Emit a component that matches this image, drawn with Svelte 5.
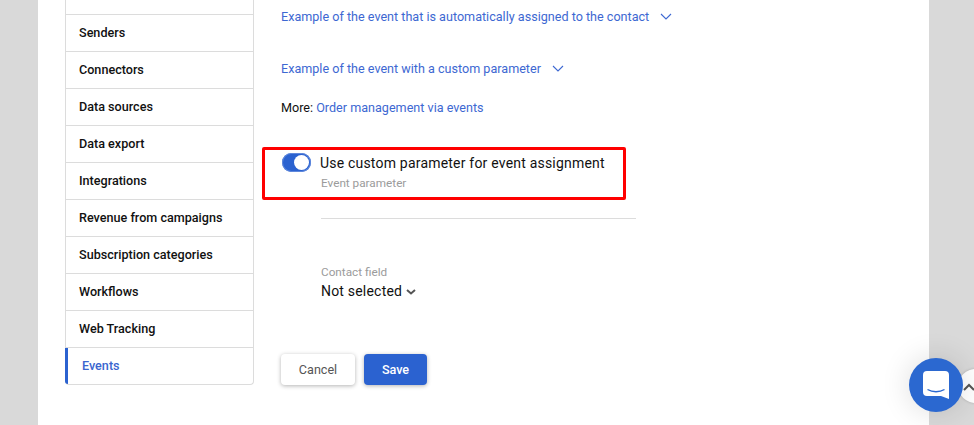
<script>
  const items = [
    'Senders',
    'Connectors',
    'Data sources',
    'Data export',
    'Integrations',
    'Revenue from campaigns',
    'Subscription categories',
    'Workflows',
    'Web Tracking'
  ]
</script>

<div class="page">
  <div class="sheet">
    <nav class="menu">
      <div class="menu__top"></div>
      {#each items as item}
        <a class="menu__item" href="#top">{item}</a>
      {/each}
      <a class="menu__item menu__item--active" href="#top">Events</a>
    </nav>

    <main class="content">
      <a class="example example--first" href="#top">
        Example of the event that is automatically assigned to the contact
        <svg width="12" height="7" viewBox="0 0 12 7"><path d="M1 1l5 5 5-5" /></svg>
      </a>
      <a class="example example--second" href="#top">
        Example of the event with a custom parameter
        <svg width="12" height="7" viewBox="0 0 12 7"><path d="M1 1l5 5 5-5" /></svg>
      </a>
      <p class="more">More: <a href="#top">Order management via events</a></p>

      <div class="param">
        <div class="param__outline"></div>
        <span class="switch"><span class="switch__knob"></span></span>
        <div>
          <div class="param__title">Use custom parameter for event assignment</div>
          <div class="param__hint">Event parameter</div>
        </div>
      </div>

      <hr class="divider" />

      <div class="field">
        <div class="field__label">Contact field</div>
        <div class="field__value">
          Not selected
          <svg width="10" height="6" viewBox="0 0 10 6"><path d="M1 1l4 3.5L9 1" /></svg>
        </div>
      </div>

      <div class="actions">
        <button class="btn btn--cancel" type="button">Cancel</button>
        <button class="btn btn--save" type="button">Save</button>
      </div>
    </main>
  </div>

  <button class="to-top" type="button" aria-label="Scroll to top">
    <svg width="12" height="8" viewBox="0 0 12 8"><path d="M1 7l5-5 5 5" /></svg>
  </button>
  <button class="chat" type="button" aria-label="Chat">
    <svg width="28" height="28" viewBox="0 0 28 28">
      <path class="chat__bubble" d="M4 0h18a4 4 0 0 1 4 4v24l-8-3H4a4 4 0 0 1-4-4V4a4 4 0 0 1 4-4z" />
      <path class="chat__smile" d="M4.5 18.5c5 3 12 3 17 0" />
    </svg>
  </button>
</div>

<style>
  :global(body) {
    margin: 0;
    background: #d9d9d9;
  }

  .page {
    position: relative;
    width: 974px;
    height: 425px;
    overflow: hidden;
    font-family: Roboto, sans-serif;
    font-size: 12.6px;
    color: #111;
  }

  .sheet {
    display: flex;
    align-items: flex-start;
    width: 891px;
    height: 425px;
    margin-left: 38px;
    padding-left: 27px;
    box-sizing: border-box;
    background: #fff;
  }

  /* Sidebar */
  .menu {
    flex: none;
    width: 189px;
    box-sizing: border-box;
    border: 1px solid #dcdcdc;
    border-top: none;
    border-radius: 0 0 4px 4px;
  }

  .menu__top {
    height: 14px;
    border-bottom: 1px solid #dcdcdc;
  }

  .menu__item {
    display: flex;
    align-items: center;
    height: 34px;
    padding: 0 0 2px 13px;
    font-weight: 500;
    color: #111;
    text-decoration: none;
    border-bottom: 1px solid #dcdcdc;
  }

  .menu__item--active {
    padding-left: 14px;
    margin-left: -1px;
    border-left: 3px solid #2b62d0;
    border-bottom: none;
    border-bottom-left-radius: 3px;
    color: #3a66cf;
  }

  /* Main column */
  .content {
    flex: none;
    width: 400px;
    margin-left: 27px;
  }

  a {
    color: #3d68d2;
    text-decoration: none;
  }

  .example {
    display: flex;
    align-items: center;
    gap: 11px;
    height: 16px;
    white-space: nowrap;
  }

  svg path {
    fill: none;
    stroke: currentColor;
  }

  .example svg path {
    stroke-width: 1.1;
  }

  .example--first {
    margin-top: 8px;
  }

  .example--second {
    margin-top: 36px;
  }

  .more {
    margin: 24px 0 0;
    line-height: 16px;
  }

  .param {
    position: relative;
    display: flex;
    gap: 9px;
    margin-top: 40px;
    padding-left: 1px;
    height: 38px;
  }

  .param__outline {
    position: absolute;
    top: -9px;
    left: -19px;
    width: 364px;
    height: 53px;
    box-sizing: border-box;
    border: 3px solid #f00;
    border-radius: 2px;
  }

  .switch {
    flex: none;
    display: block;
    position: relative;
    width: 29px;
    height: 19px;
    margin-top: -3px;
    border-radius: 10px;
    background: #2b62d0;
    box-shadow: inset 0 0 0 1px #5f88dc;
  }

  .switch__knob {
    position: absolute;
    top: 2px;
    right: 2px;
    width: 15px;
    height: 15px;
    border-radius: 50%;
    background: #fff;
  }

  .param__title {
    margin-top: -1px;
    font-size: 14px;
    line-height: 16px;
    letter-spacing: 0.2px;
    white-space: nowrap;
  }

  .param__hint {
    margin: 5px 0 0 1px;
    font-size: 11.76px;
    line-height: 14px;
    color: #9b9b9b;
  }

  .divider {
    width: 315px;
    margin: 24px 0 0 40px;
    border: none;
    border-top: 1px solid #dcdcdc;
  }

  .field {
    margin: 46px 0 0 40px;
  }

  .field__label {
    font-size: 11.76px;
    line-height: 14px;
    color: #9b9b9b;
  }

  .field__value {
    display: flex;
    align-items: center;
    gap: 4px;
    margin-top: 3px;
    font-size: 14px;
    line-height: 18px;
    letter-spacing: 0.2px;
  }

  .field__value svg {
    color: #555;
    margin-top: 2px;
  }

  .field__value svg path {
    stroke-width: 2;
  }

  .actions {
    display: flex;
    gap: 9px;
    margin-top: 54px;
  }

  .btn {
    height: 31px;
    border-radius: 4px;
    border: none;
    font-family: inherit;
    font-size: 12.6px;
    cursor: pointer;
    box-shadow: 0 1px 4px rgba(0, 0, 0, 0.3);
  }

  .btn--cancel {
    width: 74px;
    background: #fff;
    color: #555;
  }

  .btn--save {
    width: 63px;
    background: #2b62d0;
    color: #fff;
    font-weight: 500;
  }

  /* Floating widgets */
  .to-top {
    position: absolute;
    left: 958px;
    top: 369px;
    width: 36px;
    height: 34px;
    padding: 0 0 0 5px;
    text-align: left;
    border: none;
    border-radius: 50%;
    background: #fff;
    color: #555;
    box-shadow: 0 0 3px rgba(0, 0, 0, 0.2);
  }

  .to-top svg path {
    stroke-width: 2;
  }

  .chat {
    position: absolute;
    left: 909px;
    top: 358px;
    display: flex;
    align-items: center;
    justify-content: center;
    width: 54px;
    height: 54px;
    padding: 0 0 0 1px;
    border: none;
    border-radius: 50%;
    background: #2b68d0;
    box-shadow: 0 0 30px rgba(0, 0, 0, 0.14);
  }

  .chat svg path.chat__bubble {
    fill: #fff;
    stroke: none;
  }

  .chat svg path.chat__smile {
    stroke: #2b68d0;
    stroke-width: 1.4;
  }
</style>
